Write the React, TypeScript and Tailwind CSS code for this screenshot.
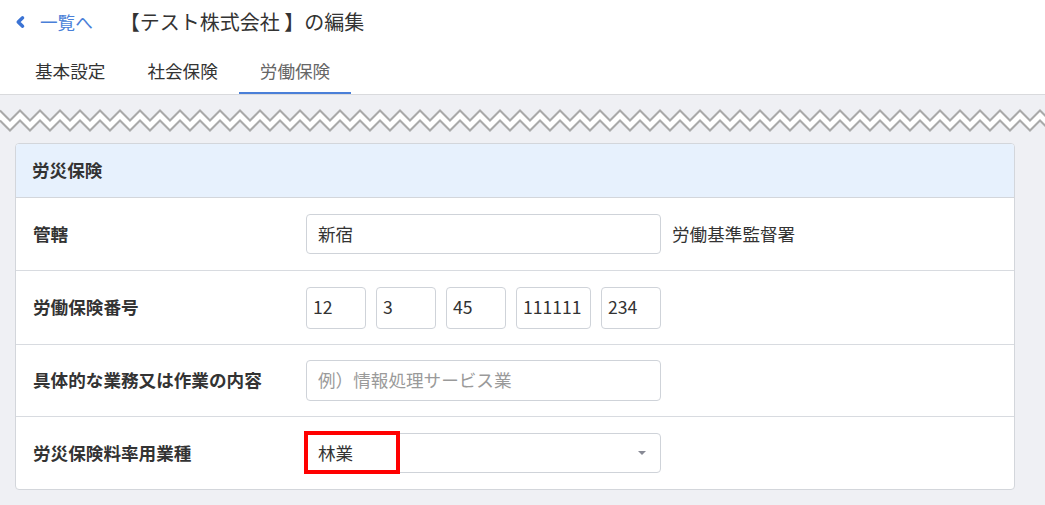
import React from "react";

const FONT = '"Noto Sans CJK JP", "Noto Sans", sans-serif';

function Zigzag() {
  const w = 1080;
  const topPts: string[] = [];
  const botPts: string[] = [];
  for (let x = 0; x <= w; x += 10) {
    const up = (x / 10) % 2 === 0;
    topPts.push(`${x},${up ? 1.5 : 11.5}`);
    botPts.push(`${x},${up ? 11.5 : 21.5}`);
  }
  const top = topPts.join(" ");
  const bottom = botPts.join(" ");
  const fill = topPts.concat([...botPts].reverse()).join(" ");
  return (
    <svg width="100%" height="24" className="block" preserveAspectRatio="none">
      <polygon points={fill} fill="#ffffff" />
      <polyline points={top} fill="none" stroke="#a9a9a9" strokeWidth="2" />
      <polyline points={bottom} fill="none" stroke="#a9a9a9" strokeWidth="2" />
    </svg>
  );
}

function Label({ children }: { children: React.ReactNode }) {
  return (
    <div className="w-[290px] shrink-0 pl-[17px] font-bold text-[#333333] text-[17.6px]">
      {children}
    </div>
  );
}

function NumBox({ v, w }: { v: string; w: string }) {
  return (
    <div
      className={`${w} h-[42px] border border-[#cfd3d9] rounded-[4px] bg-white flex items-center px-[6px] text-[17.6px] text-[#333333]`}
    >
      {v}
    </div>
  );
}

export default function App() {
  return (
    <div className="min-h-screen bg-[#eff0f4]" style={{ fontFamily: FONT }}>
      <header className="bg-white border-b border-[#d9dadd]">
        <div className="h-[44px] flex items-center pl-[14px]">
          <svg width="12" height="14" viewBox="0 0 12 14" className="block">
            <path
              d="M8.6 2.8 L4.2 7 L8.6 11.2"
              fill="none"
              stroke="#3b73d4"
              strokeWidth="3.4"
              strokeLinecap="round"
              strokeLinejoin="round"
            />
          </svg>
          <span className="ml-[14px] text-[17.6px] text-[#4a7fd8]">一覧へ</span>
          <span className="ml-[27px] text-[20px] text-[#333333]">【テスト株式会社 】の編集</span>
        </div>
        <nav className="mt-[6px] flex pl-[14px] h-[44px]">
          <div className="px-[21px] flex items-center border-b-2 border-transparent text-[17.6px] text-[#333333]">基本設定</div>
          <div className="px-[21px] flex items-center border-b-2 border-transparent text-[17.6px] text-[#333333]">社会保険</div>
          <div className="px-[21px] flex items-center border-b-2 border-[#4a7fd8] text-[17.6px] text-[#666666]">労働保険</div>
        </nav>
      </header>

      <div className="pt-[14px]">
        <Zigzag />
      </div>

      <div className="mx-[15px] mt-[10px] mr-[30px] border border-[#d3d6db] rounded-[4px] bg-white overflow-hidden">
        <div className="h-[54px] bg-[#e7f1fd] border-b border-[#d3d6db] flex items-center pl-[16px] font-bold text-[17.6px] text-[#333333]">
          労災保険
        </div>

        <div className="h-[73px] border-b border-[#d8dbe0] flex items-center">
          <Label>管轄</Label>
          <div className="w-[355px] h-[40px] border border-[#cfd3d9] rounded-[4px] flex items-center px-[11px] text-[17.6px] text-[#333333]">
            新宿
          </div>
          <span className="ml-[11px] text-[17.6px] text-[#333333]">労働基準監督署</span>
        </div>

        <div className="h-[74px] border-b border-[#d8dbe0] flex items-center">
          <Label>労働保険番号</Label>
          <div className="flex gap-[10px]">
            <NumBox v="12" w="w-[60px]" />
            <NumBox v="3" w="w-[60px]" />
            <NumBox v="45" w="w-[60px]" />
            <NumBox v="111111" w="w-[75px]" />
            <NumBox v="234" w="w-[60px]" />
          </div>
        </div>

        <div className="h-[72px] border-b border-[#d8dbe0] flex items-center">
          <Label>具体的な業務又は作業の内容</Label>
          <div className="w-[355px] h-[41px] border border-[#cfd3d9] rounded-[4px] flex items-center px-[11px] text-[17.6px] text-[#9a9a9a]">
            例）情報処理サービス業
          </div>
        </div>

        <div className="h-[72px] flex items-center">
          <Label>労災保険料率用業種</Label>
          <div className="relative w-[355px] h-[40px] border border-[#cfd3d9] rounded-[4px] flex items-center px-[11px] text-[17.6px] text-[#333333]">
            林業
            <svg width="8" height="4" viewBox="0 0 8 4" className="absolute right-[14px] top-[17px]">
              <path d="M0 0 L8 0 L4 4 Z" fill="#888a95" />
            </svg>
            <div className="absolute left-[-3px] top-[-3px] w-[96px] h-[43px] border-[4px] border-[#ff0000]" />
          </div>
        </div>
      </div>
    </div>
  );
}
